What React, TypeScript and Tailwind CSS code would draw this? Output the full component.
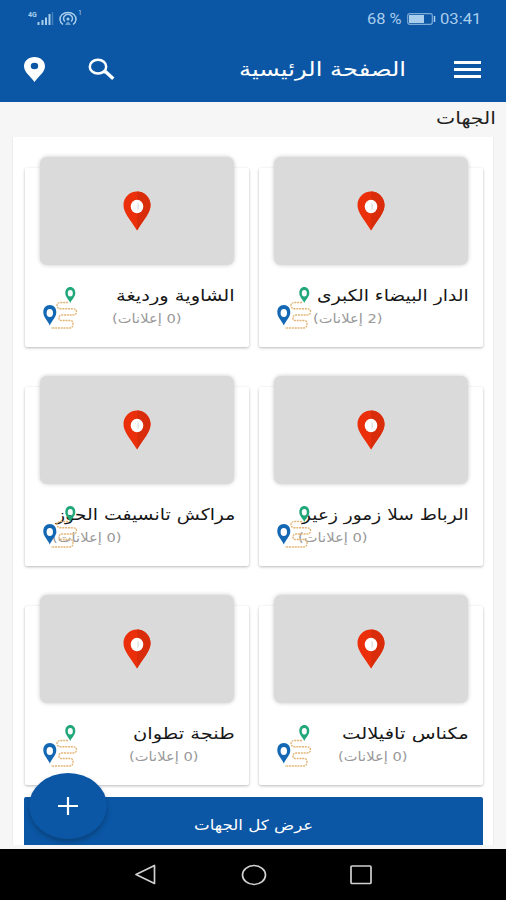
import { useLayoutEffect, useRef, useState } from "react";

const regions = [
  { name: "الدار البيضاء الكبرى", width: 152, count: 2 },
  { name: "الشاوية ورديغة", width: 119, count: 0 },
  { name: "الرباط سلا زمور زعير", width: 167, count: 0 },
  { name: "مراكش تانسيفت الحوز", width: 179, count: 0 },
  { name: "مكناس تافيلالت", width: 127, count: 0 },
  { name: "طنجة تطوان", width: 102, count: 0 },
];

/* Text stretched horizontally so that it fills a given width. */
function Fit({ text, width, className = "", dir = "rtl" }: { text: string; width: number; className?: string; dir?: "rtl" | "ltr" }) {
  const ref = useRef<HTMLSpanElement>(null);
  const [scale, setScale] = useState(1);
  useLayoutEffect(() => {
    if (ref.current) setScale(width / ref.current.offsetWidth);
  }, [width, text]);
  return (
    <div dir={dir} className={`flex shrink-0 ${className}`} style={{ width }}>
      <span
        ref={ref}
        className={`inline-block shrink-0 whitespace-nowrap ${dir === "rtl" ? "origin-right" : "origin-left"}`}
        style={{ transform: `scaleX(${scale})` }}
      >
        {text}
      </span>
    </div>
  );
}

function RedPin() {
  return (
    <svg width="28" height="40" viewBox="0 0 28 40">
      <path d="M14 .5C6.500.5.5 6.500.5 14c0 8 6.500 14 13.500 25.500C21 28 27.500 22 27.500 14 27.500 6.500 21.500.5 14 .5Z" fill="#ea2f0a" />
      <path d="M14 .5C21.500.5 27.500 6.500 27.500 14c0 8-6.500 14-13.500 25.500Z" fill="#d92c0a" />
      <ellipse cx="14" cy="15.500" rx="6.300" ry="6.800" fill="#fff" />
      <path d="M14.500 11.500c2 1 2 7 0 8Z" fill="#dedede" />
    </svg>
  );
}

function RouteIcon() {
  return (
    <svg width="36" height="44" viewBox="0 0 36 44">
      <path
        d="M25 15.500h-7q-4 0-4 3t4 3.300h12q3.500 0 3.500 3t-3.500 3.200H19q-3 0-3 3t3 2.500h8q3 0 3 3.500t-3 4H8"
        fill="none"
        stroke="#e2b577"
        strokeWidth="1.400"
        strokeDasharray="2 .8"
      />
      <path fillRule="evenodd" d="M27.300 0c-3 0-5 2.500-5 6 0 4 3.200 6 5 10 1.800-4 5-6 5-10 0-3.500-2-6-5-6Zm0 3a2.500 3.200 0 0 1 0 6.400 2.500 3.200 0 0 1 0-6.400Z" fill="#21a779" />
      <path fillRule="evenodd" d="M6.800 18C2.800 18 .3 21 .3 25.300c0 5 4.200 8 6.500 13.200 2.300-5.200 6.500-8.200 6.500-13.200C13.300 21 10.800 18 6.800 18Zm0 4a3.200 4 0 0 1 0 8 3.200 4 0 0 1 0-8Z" fill="#1468b3" />
    </svg>
  );
}

function RegionCard({ name, width, count }: { name: string; width: number; count: number }) {
  return (
    <article className="relative h-[179px] rounded-[2px] bg-white px-[15px] shadow-[0_1px_3px_rgba(0,0,0,0.28)]">
      <div className="-mt-[11px] flex h-[108px] w-[194px] items-center justify-center rounded-[7px] bg-[#dadada] shadow-[0_0_4px_rgba(0,0,0,0.22)]">
        <RedPin />
      </div>
      <div className="-mr-px mt-[19px] flex w-fit flex-col items-end">
        <Fit text={name} width={width} className="h-6 text-[16px] leading-6 text-[#161616]" />
        <Fit text={`(${count} إعلانات)`} width={70} className="-ml-[4px] h-5 pt-px text-[13px] leading-5 text-[#999]" />
      </div>
      <div className="absolute left-[18px] top-[119px]">
        <RouteIcon />
      </div>
    </article>
  );
}

export default function App() {
  return (
    <div className="flex h-[900px] w-[506px] flex-col overflow-hidden bg-[#f6f6f6] font-['DejaVu_Sans',sans-serif]">
      <header className="h-[102px] shrink-0 bg-[#0b57a5] text-white">
        <div className="flex h-[36px] items-center justify-between pl-7 pr-[25px] text-[#a9cdec]">
          <svg width="56" height="20" viewBox="0 0 56 20" fill="none" stroke="currentColor">
            <text x="0" y="9" fontSize="7" fontWeight="bold" fontFamily="Roboto" fill="currentColor" stroke="none">4G</text>
            <path d="M10.500 14v3M14.500 12v5M18 9.500V17M21.500 6v11" strokeWidth="2" />
            <path d="M24.500 4v13" strokeWidth="1.500" opacity=".35" />
            <path d="M35 16.500A8 6.800 0 1 1 45 16.500M37 13.500A4.500 4 0 1 1 43 13.500" strokeWidth="1.500" />
            <circle cx="40" cy="11" r="1.500" fill="currentColor" stroke="none" />
            <path d="m39 14-2 3h6l-2-3Z" fill="currentColor" stroke="none" opacity=".6" />
            <text x="50" y="7" fontSize="7" fontFamily="Roboto" fill="currentColor" stroke="none">1</text>
          </svg>
          <div dir="ltr" className="flex items-center pt-[2px] font-[Roboto,sans-serif] text-[15px] leading-5">
            <Fit text="68 %" width={35} dir="ltr" />
            <svg className="ml-[5px]" width="29" height="12" viewBox="0 0 29 12">
              <rect x=".7" y=".7" width="24.600" height="10.600" rx="2" fill="none" stroke="currentColor" strokeWidth="1.200" opacity=".7" />
              <path d="M2 2h15v8H2Z" fill="currentColor" />
              <path d="M27.500 3v6" stroke="currentColor" strokeWidth="1.500" />
            </svg>
            <Fit text="03:41" width={41} dir="ltr" className="ml-[4px]" />
          </div>
        </div>
        <div className="flex h-[66px] items-center">
          <svg className="ml-6 shrink-0" width="21" height="25" viewBox="0 0 21 25">
            <path fillRule="evenodd" d="M10.500 0C4.500 0 0 4 0 9.300 0 15 6 19 10.500 25 15 19 21 15 21 9.300 21 4 16.500 0 10.500 0Zm0 5.700a3.700 3.300 0 0 1 0 6.600 3.700 3.300 0 0 1 0-6.600Z" fill="white" />
          </svg>
          <svg className="ml-[43px] shrink-0" width="27" height="23" viewBox="0 0 27 23" fill="none" stroke="white">
            <ellipse cx="10" cy="8.700" rx="8.200" ry="6.900" strokeWidth="2.500" />
            <path d="m15.500 13.500 2.500.5 7.300 6.800" strokeWidth="3.400" />
          </svg>
          <Fit text="الصفحة الرئيسية" width={167} className="-mt-px ml-auto mr-12 text-[20px] leading-7" />
          <div className="mr-[25px] flex w-[27px] flex-col gap-[4px]">
            <i className="h-[3px] bg-white" />
            <i className="h-[3px] bg-white" />
            <i className="h-[3px] bg-white" />
          </div>
        </div>
      </header>

      <main dir="rtl" className="flex h-[747px] shrink-0 flex-col overflow-hidden">
        <div className="h-[35px] shrink-0 pr-[10px] pt-[4px]">
          <Fit text="الجهات" width={60} className="text-[17px] leading-6 text-[#222]" />
        </div>
        <section className="ml-3 mr-3 h-[708px] shrink-0 border-x border-[#eeeeee] bg-white pl-3 pr-[10px] pt-[31px]">
          <div className="grid grid-cols-2 gap-x-[10px] gap-y-[40px]">
            {regions.map((r) => (
              <RegionCard key={r.name} {...r} />
            ))}
          </div>
          <div className="relative -ml-px mt-[12px] flex h-[48px] items-center justify-center rounded-t-[2px] bg-[#0b57a5] pt-[8px] text-white">
            <Fit text="عرض كل الجهات" width={119} className="text-[14px] leading-5" />
            <button
              dir="ltr"
              className="absolute -top-[24px] left-[5px] flex h-[66px] w-[78px] items-center justify-center rounded-[50%] bg-[#0b57a5] shadow-[0_3px_5px_rgba(0,0,0,0.25)]"
            >
              <svg width="20" height="18" viewBox="0 0 20 18" stroke="white" strokeWidth="2.200">
                <path d="M0 9h20M10 0v18" />
              </svg>
            </button>
          </div>
        </section>
      </main>

      <nav className="flex h-[51px] shrink-0 items-center bg-black">
        <svg className="ml-[134px]" width="22" height="22" viewBox="0 0 22 22" fill="none" stroke="#d0d0d0" strokeWidth="1.700" strokeLinejoin="round">
          <path d="M20.500 1.500v18L2 10.500Z" />
        </svg>
        <svg className="ml-[85px]" width="26" height="22" viewBox="0 0 26 22" fill="none" stroke="#d0d0d0" strokeWidth="1.700">
          <ellipse cx="13" cy="11" rx="11.500" ry="9.500" />
        </svg>
        <svg className="ml-[83px]" width="22" height="20" viewBox="0 0 22 20" fill="none" stroke="#d0d0d0" strokeWidth="1.700">
          <rect x="1" y="1" width="20" height="17.500" rx="1" />
        </svg>
      </nav>
    </div>
  );
}
